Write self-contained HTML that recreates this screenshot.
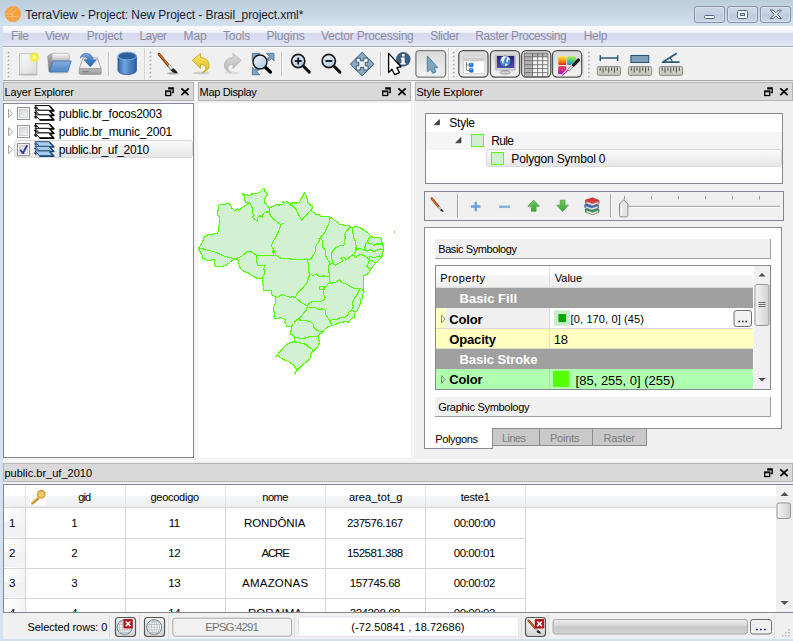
<!DOCTYPE html>
<html><head><meta charset="utf-8"><title>TerraView</title>
<style>
*{box-sizing:border-box;margin:0;padding:0}
html,body{width:793px;height:641px;overflow:hidden}
body{position:relative;background:#f0f0f0;font-family:"Liberation Sans",sans-serif;font-size:11px;color:#000}
.abs{position:absolute}
.t{position:absolute;white-space:pre;font-family:"Liberation Sans",sans-serif}
svg{position:absolute;overflow:visible}
#titlebar{left:0;top:0;width:793px;height:26px;background:linear-gradient(#bccddc 0,#c5d5e4 45%,#d4e2ef 100%)}
#lborder{left:0;top:26px;width:3px;height:615px;background:#d4e2ef}
.wbtn{top:6px;height:17px;width:31px;border:1.500px solid #8791ae;border-radius:3px;background:linear-gradient(#cbd8e7 0,#c3d1e2 48%,#bccbde 52%,#c6d5e6 100%);box-shadow:inset 0 0 0 1px rgba(255,255,255,.3)}
#menubar{left:3px;top:26px;width:790px;height:21px;background:linear-gradient(#fdfdff 0,#f1f3fa 30%,#d6daee 36%,#dcdff1 70%,#e3e6f4 94%,#a3a8c6 95%,#a3a8c6 100%)}
#toolbar{left:3px;top:47px;width:790px;height:34px;background:#f0f0f0;border-top:1px solid #fff;border-bottom:1px solid #a6a6a6}
.dtitle{height:19px;background:#d9d9d9;border:1px solid #b4b4b4}
.panel{background:#fff;border:1px solid #828790}

</style></head><body>
<div id="titlebar" class="abs"></div><div id="lborder" class="abs"></div>
<svg style="left:5px;top:6px" width="16" height="16" viewBox="0 0 16 16"><circle cx="8" cy="8" r="8" fill="#f2a040"/><path d="M7.400 6.600V14.500M2 10.400H14M7.400 6.600L12.500 2.600M3.500 5.600L9.500 .9" stroke="#f7c184" stroke-width=".8" fill="none"/><path d="M1 7.900H7.400" stroke="#f5b672" stroke-width="1.500" fill="none"/></svg>
<span class="t" style="left:25.30px;top:8.84px;font-size:12px;line-height:12px;letter-spacing:-0.085px;color:#1c1c30;">TerraView - Project: New Project - Brasil_project.xml*</span>
<div class="abs wbtn" style="left:694px"></div>
<div class="abs wbtn" style="left:727px"></div>
<div class="abs wbtn" style="left:760px"></div>
<svg style="left:694px;top:6px" width="97" height="17" viewBox="0 0 97 17">
<rect x="10.5" y="9.5" width="10" height="3" rx="1" fill="#f4f6fa" stroke="#5a6880" stroke-width="1"/>
<rect x="43.5" y="4.5" width="10" height="8" rx="1.2" fill="#f4f6fa" stroke="#5a6880" stroke-width="1"/>
<rect x="46.5" y="7.5" width="4" height="2" fill="#c3d0e3" stroke="#5a6880" stroke-width="1"/>
<path transform="translate(81.8 8.3)" d="M-5.6-4.2h3l2.600 2.700 2.600-2.700h3l-4 4.200 4 4.200h-3l-2.600-2.700-2.600 2.700h-3l4-4.200z" fill="#f6f8fb" stroke="#54627c" stroke-width="1" stroke-linejoin="round"/>
</svg>
<div id="menubar" class="abs"></div>
<span class="t" style="left:11.00px;top:30.24px;font-size:12px;line-height:12px;letter-spacing:-0.445px;color:#8c8ca0;">File</span>
<span class="t" style="left:45.00px;top:30.24px;font-size:12px;line-height:12px;letter-spacing:-0.464px;color:#8c8ca0;">View</span>
<span class="t" style="left:86.80px;top:30.24px;font-size:12px;line-height:12px;letter-spacing:-0.241px;color:#8c8ca0;">Project</span>
<span class="t" style="left:139.60px;top:30.24px;font-size:12px;line-height:12px;letter-spacing:-0.654px;color:#8c8ca0;">Layer</span>
<span class="t" style="left:183.60px;top:30.24px;font-size:12px;line-height:12px;letter-spacing:-0.172px;color:#8c8ca0;">Map</span>
<span class="t" style="left:223.00px;top:30.24px;font-size:12px;line-height:12px;letter-spacing:-0.203px;color:#8c8ca0;">Tools</span>
<span class="t" style="left:266.50px;top:30.24px;font-size:12px;line-height:12px;letter-spacing:-0.193px;color:#8c8ca0;">Plugins</span>
<span class="t" style="left:321.00px;top:30.24px;font-size:12px;line-height:12px;letter-spacing:-0.245px;color:#8c8ca0;">Vector Processing</span>
<span class="t" style="left:430.30px;top:30.24px;font-size:12px;line-height:12px;letter-spacing:-0.316px;color:#8c8ca0;">Slider</span>
<span class="t" style="left:475.30px;top:30.24px;font-size:12px;line-height:12px;letter-spacing:-0.415px;color:#8c8ca0;">Raster Processing</span>
<span class="t" style="left:583.70px;top:30.24px;font-size:12px;line-height:12px;letter-spacing:-0.293px;color:#8c8ca0;">Help</span>
<div id="toolbar" class="abs"></div>
<svg style="left:0;top:0" width="793" height="82" viewBox="0 0 793 82">
<defs>
<linearGradient id="gpage" x1="0" y1="0" x2="1" y2="1"><stop offset="0" stop-color="#fdfdfd"/><stop offset="1" stop-color="#d9d9d9"/></linearGradient>
<radialGradient id="gglow"><stop offset="0" stop-color="#ffffd0"/><stop offset=".45" stop-color="#f4ee30"/><stop offset="1" stop-color="#f0e820" stop-opacity="0"/></radialGradient>
<linearGradient id="gfold" x1="0" y1="0" x2="0" y2="1"><stop offset="0" stop-color="#84aee0"/><stop offset="1" stop-color="#5287c8"/></linearGradient>
<linearGradient id="gdrive" x1="0" y1="0" x2="0" y2="1"><stop offset="0" stop-color="#e8e8e8"/><stop offset="1" stop-color="#a8a8a8"/></linearGradient>
<linearGradient id="gcyl" x1="0" y1="0" x2="1" y2="0"><stop offset="0" stop-color="#2f68ac"/><stop offset=".35" stop-color="#6fa3dc"/><stop offset="1" stop-color="#2a5fa2"/></linearGradient>
<linearGradient id="gbtn" x1="0" y1="0" x2="0" y2="1"><stop offset="0" stop-color="#dcdcdc"/><stop offset="1" stop-color="#ececec"/></linearGradient>
<linearGradient id="glens" x1="0" y1="0" x2="1" y2="1"><stop offset="0" stop-color="#f0f6fc"/><stop offset="1" stop-color="#a9c4e2"/></linearGradient>
<linearGradient id="gruler" x1="0" y1="0" x2="0" y2="1"><stop offset="0" stop-color="#dadad2"/><stop offset="1" stop-color="#c2c2b8"/></linearGradient>
<linearGradient id="gyel" x1="0" y1="0" x2="0" y2="1"><stop offset="0" stop-color="#fbe96a"/><stop offset="1" stop-color="#e0b818"/></linearGradient>
<linearGradient id="ggray" x1="0" y1="0" x2="0" y2="1"><stop offset="0" stop-color="#dcdcdc"/><stop offset="1" stop-color="#b4b4b4"/></linearGradient>
</defs>
<rect x="6.8" y="50.8" width="2" height="2" fill="#fff"/><rect x="7.6" y="51.6" width="1.600" height="1.600" fill="#a2a2a2"/><rect x="6.8" y="54.8" width="2" height="2" fill="#fff"/><rect x="7.6" y="55.6" width="1.600" height="1.600" fill="#a2a2a2"/><rect x="6.8" y="58.8" width="2" height="2" fill="#fff"/><rect x="7.6" y="59.6" width="1.600" height="1.600" fill="#a2a2a2"/><rect x="6.8" y="62.9" width="2" height="2" fill="#fff"/><rect x="7.6" y="63.7" width="1.600" height="1.600" fill="#a2a2a2"/><rect x="6.8" y="66.9" width="2" height="2" fill="#fff"/><rect x="7.6" y="67.7" width="1.600" height="1.600" fill="#a2a2a2"/><rect x="6.8" y="70.9" width="2" height="2" fill="#fff"/><rect x="7.6" y="71.7" width="1.600" height="1.600" fill="#a2a2a2"/><rect x="6.8" y="74.9" width="2" height="2" fill="#fff"/><rect x="7.6" y="75.7" width="1.600" height="1.600" fill="#a2a2a2"/>
<rect x="148.8" y="50.8" width="2" height="2" fill="#fff"/><rect x="149.60000000000002" y="51.6" width="1.600" height="1.600" fill="#a2a2a2"/><rect x="148.8" y="54.8" width="2" height="2" fill="#fff"/><rect x="149.60000000000002" y="55.6" width="1.600" height="1.600" fill="#a2a2a2"/><rect x="148.8" y="58.8" width="2" height="2" fill="#fff"/><rect x="149.60000000000002" y="59.6" width="1.600" height="1.600" fill="#a2a2a2"/><rect x="148.8" y="62.9" width="2" height="2" fill="#fff"/><rect x="149.60000000000002" y="63.7" width="1.600" height="1.600" fill="#a2a2a2"/><rect x="148.8" y="66.9" width="2" height="2" fill="#fff"/><rect x="149.60000000000002" y="67.7" width="1.600" height="1.600" fill="#a2a2a2"/><rect x="148.8" y="70.9" width="2" height="2" fill="#fff"/><rect x="149.60000000000002" y="71.7" width="1.600" height="1.600" fill="#a2a2a2"/><rect x="148.8" y="74.9" width="2" height="2" fill="#fff"/><rect x="149.60000000000002" y="75.7" width="1.600" height="1.600" fill="#a2a2a2"/>
<rect x="452" y="50.8" width="2" height="2" fill="#fff"/><rect x="452.8" y="51.6" width="1.600" height="1.600" fill="#a2a2a2"/><rect x="452" y="54.8" width="2" height="2" fill="#fff"/><rect x="452.8" y="55.6" width="1.600" height="1.600" fill="#a2a2a2"/><rect x="452" y="58.8" width="2" height="2" fill="#fff"/><rect x="452.8" y="59.6" width="1.600" height="1.600" fill="#a2a2a2"/><rect x="452" y="62.9" width="2" height="2" fill="#fff"/><rect x="452.8" y="63.7" width="1.600" height="1.600" fill="#a2a2a2"/><rect x="452" y="66.9" width="2" height="2" fill="#fff"/><rect x="452.8" y="67.7" width="1.600" height="1.600" fill="#a2a2a2"/><rect x="452" y="70.9" width="2" height="2" fill="#fff"/><rect x="452.8" y="71.7" width="1.600" height="1.600" fill="#a2a2a2"/><rect x="452" y="74.9" width="2" height="2" fill="#fff"/><rect x="452.8" y="75.7" width="1.600" height="1.600" fill="#a2a2a2"/>
<rect x="587.3" y="50.8" width="2" height="2" fill="#fff"/><rect x="588.0999999999999" y="51.6" width="1.600" height="1.600" fill="#a2a2a2"/><rect x="587.3" y="54.8" width="2" height="2" fill="#fff"/><rect x="588.0999999999999" y="55.6" width="1.600" height="1.600" fill="#a2a2a2"/><rect x="587.3" y="58.8" width="2" height="2" fill="#fff"/><rect x="588.0999999999999" y="59.6" width="1.600" height="1.600" fill="#a2a2a2"/><rect x="587.3" y="62.9" width="2" height="2" fill="#fff"/><rect x="588.0999999999999" y="63.7" width="1.600" height="1.600" fill="#a2a2a2"/><rect x="587.3" y="66.9" width="2" height="2" fill="#fff"/><rect x="588.0999999999999" y="67.7" width="1.600" height="1.600" fill="#a2a2a2"/><rect x="587.3" y="70.9" width="2" height="2" fill="#fff"/><rect x="588.0999999999999" y="71.7" width="1.600" height="1.600" fill="#a2a2a2"/><rect x="587.3" y="74.9" width="2" height="2" fill="#fff"/><rect x="588.0999999999999" y="75.7" width="1.600" height="1.600" fill="#a2a2a2"/>
<path d="M144.5 48V80" stroke="#d0d0d0" stroke-width="1"/><path d="M145.5 48V80" stroke="#fff" stroke-width="1"/>
<path d="M448.5 48V80" stroke="#d0d0d0" stroke-width="1"/><path d="M449.5 48V80" stroke="#fff" stroke-width="1"/>
<path d="M584 48V80" stroke="#d0d0d0" stroke-width="1"/><path d="M585 48V80" stroke="#fff" stroke-width="1"/>
<path d="M108.5 52V76" stroke="#c4c4c4" stroke-width="1"/><path d="M109.5 52V76" stroke="#fafafa" stroke-width="1"/>
<path d="M281.5 52V76" stroke="#c4c4c4" stroke-width="1"/><path d="M282.5 52V76" stroke="#fafafa" stroke-width="1"/>
<path d="M380.5 52V76" stroke="#c4c4c4" stroke-width="1"/><path d="M381.5 52V76" stroke="#fafafa" stroke-width="1"/>
<rect x="18.500" y="73.800" width="19" height="1.600" rx=".8" fill="#000" opacity=".22"/>
<rect x="19.500" y="53.700" width="17.300" height="20.400" rx="1" fill="url(#gpage)" stroke="#bcbcbc" stroke-width="1"/>
<path d="M21.300 55v18" stroke="#dadada" stroke-width=".8"/><path d="M20.300 62h1M20.300 66h1" stroke="#fff" stroke-width="1"/>
<circle cx="34.300" cy="57.300" r="5.900" fill="url(#gglow)"/>
<defs><linearGradient id="gpap" x1="0" y1="0" x2="0" y2="1"><stop offset="0" stop-color="#fcfcfc"/><stop offset="1" stop-color="#b4b4b4"/></linearGradient><linearGradient id="gback" x1="0" y1="0" x2="0" y2="1"><stop offset="0" stop-color="#b4b4b4"/><stop offset="1" stop-color="#6c6c6c"/></linearGradient></defs>
<ellipse cx="59" cy="72.300" rx="10" ry="1.200" fill="#000" opacity=".2"/>
<path d="M47.600 56.200l2.600-2h2.300v17.500h-3.600z" fill="url(#gback)" stroke="#8a8a8a" stroke-width=".5"/>
<path d="M52 53.300h16.300l.9 1.200v7h-17.200z" fill="url(#gpap)" stroke="#a0a0a0" stroke-width=".6"/>
<path d="M52.800 60.900h18.400l-3.400 10.900h-18.300z" fill="url(#gfold)" stroke="#3f70ae" stroke-width=".8" stroke-linejoin="round"/>
<path d="M83 57.800h14.200l3.900 11h-21.900z" fill="#f0f0f0" stroke="#a2a2a2" stroke-width=".9" stroke-linejoin="round"/>
<rect x="79.200" y="68.800" width="21.900" height="5.500" rx="1" fill="url(#gdrive2)" stroke="#8c8c8c" stroke-width=".8"/>
<path d="M82.300 71.600h6.500" stroke="#7c7c7c" stroke-width="1.300"/>
<defs><linearGradient id="gdrive2" x1="0" y1="0" x2="0" y2="1"><stop offset="0" stop-color="#bebebe"/><stop offset="1" stop-color="#9c9c9c"/></linearGradient><linearGradient id="garr" x1="0" y1="0" x2="0" y2="1"><stop offset="0" stop-color="#7eabe2"/><stop offset=".5" stop-color="#3f7cc4"/><stop offset="1" stop-color="#2f66ac"/></linearGradient></defs>
<path d="M80.200 58.200c.6-3 3.300-5 6.400-4.900 3.300.1 5.800 2.500 6.300 6.400h3.600l-6.200 7.100-6.300-7.100h3.900c-.4-2.400-2.500-3.700-4.700-3.400-1.300.2-2.300.9-3 1.900z" fill="url(#garr)" stroke="#2c5e9e" stroke-width=".6" stroke-linejoin="round"/>
<path d="M118 56v14.500c0 2.300 4.100 4 9.200 4s9.200-1.700 9.200-4V56z" fill="url(#gcyl)" stroke="#23518d" stroke-width=".8"/>
<ellipse cx="127.200" cy="56" rx="9.200" ry="3.900" fill="#2c5f9e" stroke="#7fb0e4" stroke-width="1"/>
<ellipse cx="173" cy="73.300" rx="6" ry="1.300" fill="#000" opacity=".28"/>
<path d="M159 54.200l10.200 12.200" stroke="#6a2a06" stroke-width="2.700" stroke-linecap="round"/>
<path d="M159.300 54.200l10 12" stroke="#d06a1c" stroke-width="1.500" stroke-linecap="round"/>
<path d="M168.600 65.400l3.400 4.300" stroke="#8a8a8a" stroke-width="3.200"/><path d="M168.900 65.200l3.400 4.300" stroke="#e6e6e6" stroke-width="1.600"/>
<path d="M170.600 70.300l2.600-2.100c1.800 1 3.400 2.600 4.400 4.900-2.700.3-5.400-.6-7-2.800z" fill="#1e1e1e"/>
<ellipse cx="201" cy="73" rx="8" ry="1.500" fill="#000" opacity=".15"/>
<path d="M192.300 60.200l8.200-6.700v4.100c5.200.3 8.600 3.300 8.600 7.700 0 3.800-2.700 6.300-6.700 7.200 2.300-1.300 3.300-2.900 3.300-4.600 0-2.300-2-3.600-5.200-3.700v4.300z" fill="url(#gyel)" stroke="#c9a010" stroke-width=".8" stroke-linejoin="round"/>
<ellipse cx="232" cy="73" rx="8" ry="1.500" fill="#000" opacity=".08"/>
<path d="M241.200 60.200l-8.200-6.700v4.100c-5.200.3-8.600 3.300-8.600 7.700 0 3.800 2.700 6.300 6.700 7.200-2.300-1.300-3.300-2.900-3.300-4.600 0-2.300 2-3.600 5.200-3.700v4.300z" fill="url(#ggray)" stroke="#b0b0b0" stroke-width=".8" stroke-linejoin="round"/>
<g fill="#7fa2bc" stroke="#456d8c" stroke-width=".8" stroke-linejoin="round"><path d="M252.300 53.300h7.600l-2.400 2.400 2.600 2.600-2.200 2.200-2.600-2.600-3 3z"/><path d="M274 53.300v7.600l-2.400-2.400-2.600 2.600-2.200-2.200 2.600-2.600-3-3z"/><path d="M252.300 74.800v-7.600l2.400 2.400 2.600-2.600 2.200 2.200-2.600 2.600 3 3z"/></g>
<path d="M264.800 66.800l5.600 5.200" stroke="#000" stroke-width="3.400" stroke-linecap="round"/>
<circle cx="260" cy="62" r="7" fill="url(#glens)" stroke="#1c1c1c" stroke-width="1.500"/>
<path d="M302.7 65.500l6.600 6.600" stroke="#111" stroke-width="3" stroke-linecap="round"/>
<circle cx="298.2" cy="61" r="6.600" fill="url(#glens)" stroke="#1a1a1a" stroke-width="1.600"/>
<path d="M294.7 61h7" stroke="#111" stroke-width="1.800"/>
<path d="M298.2 57.500v7" stroke="#111" stroke-width="1.800"/>
<path d="M333.3 65.500l6.600 6.600" stroke="#111" stroke-width="3" stroke-linecap="round"/>
<circle cx="328.8" cy="61" r="6.600" fill="url(#glens)" stroke="#1a1a1a" stroke-width="1.600"/>
<path d="M325.3 61h7" stroke="#111" stroke-width="1.800"/>
<g transform="translate(362.100 64.100)"><rect x="-5.900" y="-5.900" width="11.800" height="11.800" fill="#fff"/><rect x="-2.200" y="-2.200" width="4.400" height="4.400" fill="#e6e8ea"/><g fill="#88aac2" stroke="#2c5068" stroke-width=".9" stroke-linejoin="round"><path d="M0-11.800l5.900 5.900h-4.050v2.700h-3.700v-2.700h-4.050z"/><path d="M0 11.800l5.900-5.900h-4.050v-2.700h-3.700v2.700h-4.050z"/><path d="M-11.800 0l5.900-5.900v4.050h2.700v3.700h-2.700v4.050z"/><path d="M11.800 0l-5.900-5.900v4.050h-2.700v3.700h2.700v4.050z"/></g></g>
<circle cx="403.300" cy="59.300" r="7.200" fill="#3a5f7c"/>
<path d="M401.500 57.500h3.100v5.600h1.100v1.300h-5.300v-1.300h1.100v-4.300h-1.100zM401.900 54h2.700v2.400h-2.700z" fill="#fff"/>
<path d="M388.600 53.400v19.200l3.300-3.300 2.900 5.400 4.600-2.100-2.500-5 4.200-.8z" fill="#fff" stroke="#000" stroke-width="1.300" stroke-linejoin="round"/>
<defs><linearGradient id="gbtn2" x1="0" y1="0" x2="0" y2="1"><stop offset="0" stop-color="#dadada"/><stop offset=".5" stop-color="#e4e4e4"/><stop offset=".52" stop-color="#e9e9e9"/><stop offset="1" stop-color="#f1f1f1"/></linearGradient></defs>
<rect x="415.900" y="50.600" width="29.700" height="26.600" rx="3.500" fill="url(#gbtn2)" stroke="#7c7c7c" stroke-width="1.300"/>
<path d="M427.300 55.900v15.900l3.400-2.500 2.100 4.100 3.300-1.600-2.100-3.800 3.800-.4z" fill="#7fa4c0" stroke="#4a7898" stroke-width=".9" stroke-linejoin="round"/>
<rect x="458.8" y="50.700" width="29.200" height="26.400" rx="4.500" fill="url(#gbtn2)" stroke="#525252" stroke-width="1.300"/>
<rect x="490.4" y="50.700" width="29.200" height="26.400" rx="4.500" fill="url(#gbtn2)" stroke="#525252" stroke-width="1.300"/>
<rect x="521.6" y="50.700" width="29.200" height="26.400" rx="4.500" fill="url(#gbtn2)" stroke="#525252" stroke-width="1.300"/>
<rect x="552.5" y="50.700" width="29.200" height="26.400" rx="4.500" fill="url(#gbtn2)" stroke="#525252" stroke-width="1.300"/>
<rect x="463.500" y="56" width="21.300" height="17.400" fill="#fff" stroke="#c8c8c8" stroke-width=".8"/><rect x="463.900" y="56.400" width="20.500" height="4.900" fill="#cdcdcd"/><rect x="463.900" y="56.400" width="20.500" height="1.600" fill="#dedede"/>
<path d="M466.400 62v8.500h3M466.400 65h3" stroke="#707070" stroke-width=".8" fill="none"/>
<rect x="469.300" y="63" width="3.800" height="3.800" rx=".8" fill="#1f6fe0" stroke="#1450b0" stroke-width=".5"/><rect x="469.300" y="68.400" width="3.800" height="3.800" rx=".8" fill="#1f6fe0" stroke="#1450b0" stroke-width=".5"/><path d="M470 64h2.400M470 69.400h2.400" stroke="#9cc8ff" stroke-width=".8"/>
<defs><linearGradient id="gscr" x1="0" y1="0" x2="0" y2="1"><stop offset="0" stop-color="#26246e"/><stop offset="1" stop-color="#4c4ca4"/></linearGradient></defs>
<path d="M495 55.200h20.800l-.8 14.900h-19.200z" fill="#d4d4d4" stroke="#a4a4a4" stroke-width=".6"/><rect x="496.800" y="56" width="17.500" height="12" fill="url(#gscr)"/>
<path d="M503 70.100h4.600l.5 1.600h-5.600z" fill="#a8a8a8"/><ellipse cx="505.200" cy="72.500" rx="5.300" ry="1.700" fill="#d0d0d0" stroke="#8c8c8c" stroke-width=".7"/>
<circle cx="505.200" cy="61" r="5.400" fill="#4585d6"/><path d="M501.300 58.700c.8-1.500 2.300-2.400 3.700-2.600 1.200.4 1 1.500 0 2.200-.8.700-.3 1.600-1.200 2.400-.6.900.4 1.900-.5 3-1-.4-1.100-1.700-1.700-2.500-.7-.8-.7-1.600-.3-2.500zM506.300 56.400c1.700.3 3 1.400 3.700 2.800-.4.800-1.200.3-1.700 1-.7.700-.1 1.700-1 2.300-.9-.2-1.100-1.200-1-2.100.2-1 .8-1.500.6-2.400-.2-.6-.7-1-.6-1.600zM505.500 63.500c.9-.3 1.700.1 2.300.8-.5.900-1.400 1.600-2.400 1.900-.4-.9-.4-1.900.1-2.700z" fill="#eef3fa"/>
<rect x="524.300" y="53.200" width="23.500" height="23.300" fill="#f4f4f4"/><rect x="524.300" y="53.200" width="8.300" height="23.300" fill="#b2b2b2"/><rect x="524.300" y="53.200" width="23.500" height="3.600" fill="#b2b2b2"/>
<path d="M524.300 53.2h23.500M524.300 56.8h23.500M524.300 60.7h23.500M524.300 64.7h23.500M524.300 68.6h23.500M524.300 72.6h23.500M524.300 76.5h23.500M524.3 53.200v23.300M532.6 53.200v23.300M537.6 53.200v23.300M542.6 53.200v23.300M547.8 53.200v23.300" stroke="#5e5e5e" stroke-width=".75" fill="none"/>
<defs><linearGradient id="gp1" x1="0" y1="0" x2="0" y2="1"><stop offset="0" stop-color="#fbe840"/><stop offset=".5" stop-color="#f7901c"/><stop offset="1" stop-color="#e2281c"/></linearGradient><linearGradient id="gp2" x1="0" y1="0" x2="0" y2="1"><stop offset="0" stop-color="#b4f050"/><stop offset=".55" stop-color="#40c888"/><stop offset="1" stop-color="#1c88d8"/></linearGradient><linearGradient id="gp3" x1="0" y1="0" x2="0" y2="1"><stop offset="0" stop-color="#f04858"/><stop offset=".5" stop-color="#d82890"/><stop offset="1" stop-color="#8c20c8"/></linearGradient></defs>
<rect x="558.200" y="56.300" width="8.100" height="8.800" rx="1.300" fill="url(#gp1)"/>
<path d="M568.500 56.300h6.100c.7 0 1.300.6 1.300 1.300v2.200l-5.300 5.300h-2.100c-.7 0-1.300-.6-1.300-1.300v-6.200c0-.7.600-1.300 1.300-1.300z" fill="url(#gp2)"/>
<path d="M559.500 65.900h5.500c.7 0 1.300.6 1.300 1.300v2.600l-4.500 4.500h-2.300c-.7 0-1.300-.6-1.300-1.300v-5.800c0-.7.600-1.300 1.300-1.300z" fill="url(#gp3)"/>
<path d="M562.200 75.500l6.800-6" stroke="#c83c98" stroke-width="1.100"/><path d="M568.300 70.200l5.300-5.300" stroke="#8c8c8c" stroke-width="3"/><path d="M568.500 70l5.300-5.300" stroke="#e4e4e4" stroke-width="1.400"/><path d="M573.600 64.900l4.800-4.800" stroke="#1a1a1a" stroke-width="3.300" stroke-linecap="round"/>
<rect x="597.3" y="66.400" width="23.300" height="9" rx="2" fill="url(#gruler)" stroke="#8c8c84" stroke-width="1"/>
<path d="M600.20 67.200v3.6M603.05 67.200v5.4M605.90 67.200v3.6M608.75 67.200v5.4M611.60 67.200v3.6M614.45 67.200v5.4M617.30 67.200v3.6" stroke="#4c4c4c" stroke-width="1"/>
<rect x="628.4" y="66.400" width="23.300" height="9" rx="2" fill="url(#gruler)" stroke="#8c8c84" stroke-width="1"/>
<path d="M631.30 67.200v3.6M634.15 67.200v5.4M637.00 67.200v3.6M639.85 67.200v5.4M642.70 67.200v3.6M645.55 67.200v5.4M648.40 67.200v3.6" stroke="#4c4c4c" stroke-width="1"/>
<rect x="659.3" y="66.400" width="23.300" height="9" rx="2" fill="url(#gruler)" stroke="#8c8c84" stroke-width="1"/>
<path d="M662.20 67.200v3.6M665.05 67.200v5.4M667.90 67.200v3.6M670.75 67.200v5.4M673.60 67.200v3.6M676.45 67.200v5.4M679.30 67.200v3.6" stroke="#4c4c4c" stroke-width="1"/>
<path d="M600.300 58.100h17.400M600.300 55.300v5.700M617.700 55.300v5.700" stroke="#2c5a78" stroke-width="1.500" fill="none"/>
<rect x="630.900" y="55.500" width="17.800" height="7" fill="#7f9fb8" stroke="#2c5a78" stroke-width="1.100"/>
<path d="M676.800 53.300l-14.300 8.900h17" stroke="#2c5a78" stroke-width="1.700" fill="none" stroke-linejoin="round"/><path d="M669.800 57.900c1.500 1.200 2.300 2.600 2.500 4.200" stroke="#2c5a78" stroke-width="1.100" fill="none"/>
</svg>
<div class="abs dtitle" style="left:3px;top:82px;width:191px"></div><span class="t" style="left:4.50px;top:86.59px;font-size:11px;line-height:11px;letter-spacing:-0.164px;color:#000;">Layer Explorer</span><svg style="left:0;top:0" width="793" height="641" viewBox="0 0 793 641"><path d="M168.2 88.0h5v4.500h-1.500M168.2 88.9h5" stroke="#000" stroke-width="1.300" fill="none"/><rect x="165.7" y="91.0" width="5" height="4.500" fill="#d9d9d9" stroke="#000" stroke-width="1.300"/><path d="M165.7 91.8h5" stroke="#000" stroke-width="1"/><path d="M181.3 88.4l7.400 6.800M188.7 88.4l-7.400 6.800" stroke="#000" stroke-width="1.800"/></svg>
<div class="abs dtitle" style="left:198px;top:82px;width:213px"></div><span class="t" style="left:199.60px;top:86.59px;font-size:11px;line-height:11px;letter-spacing:-0.332px;color:#000;">Map Display</span><svg style="left:0;top:0" width="793" height="641" viewBox="0 0 793 641"><path d="M385.2 88.0h5v4.500h-1.500M385.2 88.9h5" stroke="#000" stroke-width="1.300" fill="none"/><rect x="382.7" y="91.0" width="5" height="4.500" fill="#d9d9d9" stroke="#000" stroke-width="1.300"/><path d="M382.7 91.8h5" stroke="#000" stroke-width="1"/><path d="M398.3 88.4l7.400 6.800M405.7 88.4l-7.400 6.800" stroke="#000" stroke-width="1.800"/></svg>
<div class="abs dtitle" style="left:415px;top:82px;width:378px"></div><span class="t" style="left:416.40px;top:86.59px;font-size:11px;line-height:11px;letter-spacing:-0.129px;color:#000;">Style Explorer</span><svg style="left:0;top:0" width="793" height="641" viewBox="0 0 793 641"><path d="M767.2 88.0h5v4.500h-1.500M767.2 88.9h5" stroke="#000" stroke-width="1.300" fill="none"/><rect x="764.7" y="91.0" width="5" height="4.500" fill="#d9d9d9" stroke="#000" stroke-width="1.300"/><path d="M764.7 91.8h5" stroke="#000" stroke-width="1"/><path d="M780.3 88.4l7.400 6.800M787.7 88.4l-7.400 6.800" stroke="#000" stroke-width="1.800"/></svg>
<div class="abs dtitle" style="left:3px;top:463px;width:790px"></div><span class="t" style="left:4.50px;top:467.59px;font-size:11px;line-height:11px;letter-spacing:0.003px;color:#000;">public.br_uf_2010</span><svg style="left:0;top:0" width="793" height="641" viewBox="0 0 793 641"><path d="M767.2 469.0h5v4.500h-1.500M767.2 469.9h5" stroke="#000" stroke-width="1.300" fill="none"/><rect x="764.7" y="472.0" width="5" height="4.500" fill="#d9d9d9" stroke="#000" stroke-width="1.300"/><path d="M764.7 472.8h5" stroke="#000" stroke-width="1"/><path d="M780.3 469.4l7.400 6.800M787.7 469.4l-7.400 6.800" stroke="#000" stroke-width="1.800"/></svg>
<div class="abs" style="left:195px;top:82px;width:2px;height:376px;background:#f8f8f8"></div><div class="abs" style="left:412px;top:82px;width:2px;height:376px;background:#f8f8f8"></div><div class="abs" style="left:3px;top:459px;width:790px;height:3px;background:#f6f6f6"></div>
<div class="abs panel" style="left:3px;top:103px;width:191px;height:355px"></div>
<div class="abs" style="left:14px;top:140px;width:179px;height:18px;border:1px solid #d9d9d9;border-radius:3px;background:linear-gradient(#fafafa,#e6e6e6)"></div>
<svg style="left:0;top:0" width="200" height="200" viewBox="0 0 200 200">
<defs><linearGradient id="gcb" x1="0" y1="0" x2="1" y2="1"><stop offset="0" stop-color="#cfd4da"/><stop offset="1" stop-color="#f6f6f6"/></linearGradient></defs>
<path d="M8.500 109.39999999999999l4 4.200-4 4.200z" fill="#fff" stroke="#a6a6a6" stroke-width="1"/>
<rect x="17.500" y="107.50" width="12" height="12" fill="#fff" stroke="#8e8f8f" stroke-width="1"/><rect x="19.500" y="109.50" width="8" height="8" fill="url(#gcb)" stroke="#c4c8cc" stroke-width=".8"/>
<path d="M35 105.60h14.300l4.600 5h-14.300z" fill="#fff" stroke="#000" stroke-width="1" stroke-linejoin="round"/><path d="M39.600 110.90h14.300l-4.400-4.800" stroke="#000" stroke-width="1.500" fill="none" stroke-linejoin="round"/><path d="M34.500 107.10l2 2.200" stroke="#000" stroke-width="1.600"/>
<path d="M35 110.20h14.300l4.600 5h-14.300z" fill="#fff" stroke="#000" stroke-width="1" stroke-linejoin="round"/><path d="M39.600 115.50h14.300l-4.400-4.800" stroke="#000" stroke-width="1.500" fill="none" stroke-linejoin="round"/><path d="M34.500 111.70l2 2.200" stroke="#000" stroke-width="1.600"/>
<path d="M35 114.80h14.300l4.600 5h-14.300z" fill="#fff" stroke="#000" stroke-width="1" stroke-linejoin="round"/><path d="M39.600 120.10h14.300l-4.400-4.800" stroke="#000" stroke-width="1.500" fill="none" stroke-linejoin="round"/><path d="M34.500 116.30l2 2.200" stroke="#000" stroke-width="1.600"/>
<path d="M8.500 127.49999999999999l4 4.200-4 4.200z" fill="#fff" stroke="#a6a6a6" stroke-width="1"/>
<rect x="17.500" y="125.60" width="12" height="12" fill="#fff" stroke="#8e8f8f" stroke-width="1"/><rect x="19.500" y="127.60" width="8" height="8" fill="url(#gcb)" stroke="#c4c8cc" stroke-width=".8"/>
<path d="M35 123.70h14.300l4.600 5h-14.300z" fill="#fff" stroke="#000" stroke-width="1" stroke-linejoin="round"/><path d="M39.600 129.00h14.300l-4.400-4.800" stroke="#000" stroke-width="1.500" fill="none" stroke-linejoin="round"/><path d="M34.500 125.20l2 2.200" stroke="#000" stroke-width="1.600"/>
<path d="M35 128.30h14.300l4.600 5h-14.300z" fill="#fff" stroke="#000" stroke-width="1" stroke-linejoin="round"/><path d="M39.600 133.60h14.300l-4.400-4.800" stroke="#000" stroke-width="1.500" fill="none" stroke-linejoin="round"/><path d="M34.500 129.80l2 2.200" stroke="#000" stroke-width="1.600"/>
<path d="M35 132.90h14.300l4.600 5h-14.300z" fill="#fff" stroke="#000" stroke-width="1" stroke-linejoin="round"/><path d="M39.600 138.20h14.300l-4.400-4.800" stroke="#000" stroke-width="1.500" fill="none" stroke-linejoin="round"/><path d="M34.500 134.40l2 2.200" stroke="#000" stroke-width="1.600"/>
<path d="M8.500 145.5l4 4.200-4 4.200z" fill="#fff" stroke="#a6a6a6" stroke-width="1"/>
<rect x="17.500" y="143.60" width="12" height="12" fill="#fff" stroke="#8e8f8f" stroke-width="1"/><rect x="19.500" y="145.60" width="8" height="8" fill="url(#gcb)" stroke="#c4c8cc" stroke-width=".8"/>
<path d="M20.300 149.7l2.600 3.600 4.300-8" stroke="#2b3a9c" stroke-width="1.900" fill="none" stroke-linejoin="round"/>
<path d="M35 141.70h14.300l4.600 5h-14.300z" fill="#a9cdee" stroke="#1f4a78" stroke-width="1" stroke-linejoin="round"/><path d="M39.600 147.00h14.300l-4.400-4.800" stroke="#1f4a78" stroke-width="1.500" fill="none" stroke-linejoin="round"/><path d="M34.500 143.20l2 2.200" stroke="#1f4a78" stroke-width="1.600"/>
<path d="M35 146.30h14.300l4.600 5h-14.300z" fill="#a9cdee" stroke="#1f4a78" stroke-width="1" stroke-linejoin="round"/><path d="M39.600 151.60h14.300l-4.400-4.800" stroke="#1f4a78" stroke-width="1.500" fill="none" stroke-linejoin="round"/><path d="M34.500 147.80l2 2.200" stroke="#1f4a78" stroke-width="1.600"/>
<path d="M35 150.90h14.300l4.600 5h-14.300z" fill="#a9cdee" stroke="#1f4a78" stroke-width="1" stroke-linejoin="round"/><path d="M39.600 156.20h14.300l-4.400-4.800" stroke="#1f4a78" stroke-width="1.500" fill="none" stroke-linejoin="round"/><path d="M34.500 152.40l2 2.200" stroke="#1f4a78" stroke-width="1.600"/>
</svg>
<span class="t" style="left:58.80px;top:107.64px;font-size:12px;line-height:12px;letter-spacing:-0.223px;color:#000;">public.br_focos2003</span>
<span class="t" style="left:58.80px;top:125.64px;font-size:12px;line-height:12px;letter-spacing:-0.206px;color:#000;">public.br_munic_2001</span>
<span class="t" style="left:58.80px;top:143.64px;font-size:12px;line-height:12px;letter-spacing:-0.307px;color:#000;">public.br_uf_2010</span>
<div class="abs" style="left:198px;top:103px;width:213px;height:355px;background:#fff"></div>
<div class="abs panel" style="left:425px;top:113px;width:358px;height:71px"></div>
<div class="abs" style="left:426px;top:132px;width:356px;height:18px;background:#f5f5f5"></div>
<div class="abs" style="left:486px;top:149px;width:296px;height:18px;border:1px solid #d9d9d9;border-radius:3px;background:linear-gradient(#fafafa,#e6e6e6)"></div>
<svg style="left:0;top:0" width="793" height="641" viewBox="0 0 793 641">
<defs><linearGradient id="ggrn" x1="0" y1="0" x2="0" y2="1"><stop offset="0" stop-color="#74cc5c"/><stop offset="1" stop-color="#3aa632"/></linearGradient></defs>
<path d="M439.500 119.500v5.300h-5.300z" fill="#404040" stroke="#262626" stroke-width=".6"/>
<path d="M461 137.500v5.300h-5.300z" fill="#404040" stroke="#262626" stroke-width=".6"/>
<rect x="471.500" y="134.500" width="12" height="12" fill="#d0efd0" stroke="#55ff00" stroke-width="1"/>
<rect x="491.500" y="152.500" width="12" height="12" fill="#d0efd0" stroke="#55ff00" stroke-width="1"/>
<rect x="424.500" y="191.500" width="359" height="29" fill="#f0f0f0" stroke="#828790" stroke-width="1"/>
<path d="M431.800 198.500l7.800 9.600" stroke="#7a3208" stroke-width="2.400" stroke-linecap="round"/><path d="M431.800 198.500l7.800 9.600" stroke="#d9711f" stroke-width="1.200" stroke-linecap="round"/><path d="M438.800 207l1.800 2.200" stroke="#c4c4c4" stroke-width="2.400"/><path d="M440 210l1.400-1.200c1 .8 1.800 1.700 2.400 3-1.600.2-3-.5-3.800-1.800z" fill="#222"/>
<path d="M457.500 194v23" stroke="#a0a0a0" stroke-width="1"/><path d="M458.500 194v23" stroke="#fff" stroke-width="1"/>
<path d="M610.500 194v23" stroke="#a0a0a0" stroke-width="1"/><path d="M611.500 194v23" stroke="#fff" stroke-width="1"/>
<path d="M471 206.500h9.500M475.750 201.800v9.500" stroke="#669fdb" stroke-width="2.300"/>
<path d="M499 206.800h11" stroke="#86b1de" stroke-width="2.500"/>
<path d="M533.700 200l5.800 6.300h-3.400v5h-4.800v-5h-3.400z" fill="url(#ggrn)" stroke="#37962f" stroke-width=".6" stroke-linejoin="round"/>
<path d="M562.600 211.500l5.800-6.300h-3.400v-5h-4.800v5h-3.400z" fill="url(#ggrn)" stroke="#37962f" stroke-width=".6" stroke-linejoin="round"/>
<g stroke-width=".6"><path d="M585.500 209l7-2 6.500 2.500v3l-6.500 2.200-7-2.600z" fill="#2e9a48" stroke="#1c6a30"/><path d="M586.500 210.600l6 2 5.800-2v1.800l-5.800 2-6-2.200z" fill="#f4f4f4" stroke="#999"/><path d="M584.800 204.600l7-2 6.800 2.500v3l-6.800 2.200-7-2.600z" fill="#2c6fc0" stroke="#1b4c8a"/><path d="M585.800 206.200l6 2 6-2v1.800l-6 2-6-2.200z" fill="#f4f4f4" stroke="#999"/><path d="M585.500 200l7-2.200 6.500 2.600v3.200l-6.500 2.200-7-2.600z" fill="#d83a3a" stroke="#a02020"/><path d="M586.500 201.800l6 2 5.800-2v1.800l-5.800 2-6-2.200z" fill="#f4f4f4" stroke="#999"/></g>
<path d="M628 206.500h152" stroke="#b4b4b4" stroke-width="1"/><path d="M628 207.500h152" stroke="#fff" stroke-width="1"/><path d="M628 205.500h152" stroke="#e0e0e0" stroke-width="1"/>
<path d="M624.5 196v3.500" stroke="#9c9c9c" stroke-width="1"/>
<path d="M651.5 196v3.500" stroke="#9c9c9c" stroke-width="1"/>
<path d="M678.5 196v3.500" stroke="#9c9c9c" stroke-width="1"/>
<path d="M705.5 196v3.500" stroke="#9c9c9c" stroke-width="1"/>
<path d="M732.5 196v3.500" stroke="#9c9c9c" stroke-width="1"/>
<path d="M759.5 196v3.500" stroke="#9c9c9c" stroke-width="1"/>
<path d="M619.500 204l4.200-4.200 4.200 4.200v11.500c0 .8-.5 1.300-1.300 1.300h-5.800c-.8 0-1.300-.5-1.300-1.300z" fill="#e4e4e4" stroke="#8c8c8c" stroke-width="1"/><path d="M621.500 205v10.500" stroke="#fafafa" stroke-width="1.500"/>
</svg>
<span class="t" style="left:449.30px;top:116.64px;font-size:12px;line-height:12px;letter-spacing:-0.244px;color:#000;">Style</span>
<span class="t" style="left:491.30px;top:134.64px;font-size:12px;line-height:12px;letter-spacing:-0.660px;color:#000;">Rule</span>
<span class="t" style="left:511.30px;top:152.64px;font-size:12px;line-height:12px;letter-spacing:-0.168px;color:#000;">Polygon Symbol 0</span>
<div class="abs" style="left:424px;top:227px;width:358px;height:202px;background:#fff;border:1px solid #898c95"></div>
<div class="abs" style="left:435px;top:239px;width:336px;height:20px;background:#f0f0f0;border-right:1px solid #a0a0a0;border-bottom:1px solid #a0a0a0"></div>
<div class="abs" style="left:435px;top:397px;width:336px;height:20px;background:#f0f0f0;border-right:1px solid #a0a0a0;border-bottom:1px solid #a0a0a0"></div>
<span class="t" style="left:438.20px;top:243.69px;font-size:11px;line-height:11px;letter-spacing:-0.398px;color:#000;">Basic Symbology</span>
<span class="t" style="left:438.20px;top:401.69px;font-size:11px;line-height:11px;letter-spacing:-0.293px;color:#000;">Graphic Symbology</span>
<div class="abs" style="left:435px;top:265px;width:336px;height:125px;background:#fff;border:1px solid #828790"></div>
<div class="abs" style="left:436px;top:266px;width:317px;height:22px;background:linear-gradient(#fff 0,#fff 40%,#f5f5f6 42%,#f0f0f1 92%,#d8d8d8 100%)"></div>
<div class="abs" style="left:549px;top:266px;width:1px;height:21px;background:#dcdcdc"></div>
<span class="t" style="left:440.20px;top:272.69px;font-size:11px;line-height:11px;letter-spacing:0.461px;color:#000;">Property</span>
<span class="t" style="left:554.80px;top:272.69px;font-size:11px;line-height:11px;letter-spacing:-0.029px;color:#000;">Value</span>
<div class="abs" style="left:436px;top:288px;width:317px;height:20px;background:#a0a0a0"></div>
<div class="abs" style="left:436px;top:308px;width:317px;height:21px;background:#fff"></div>
<div class="abs" style="left:436px;top:308px;width:10px;height:20px;background:#ffffc8"></div>
<div class="abs" style="left:446px;top:308px;width:103px;height:20px;background:#efefef"></div>
<div class="abs" style="left:436px;top:329px;width:317px;height:20px;background:#ffffbf"></div>
<div class="abs" style="left:436px;top:349px;width:317px;height:20px;background:#a0a0a0"></div>
<div class="abs" style="left:436px;top:369px;width:317px;height:20px;background:#afffaf"></div>
<div class="abs" style="left:436px;top:328px;width:317px;height:1px;background:#dcdcdc"></div>
<div class="abs" style="left:436px;top:348px;width:317px;height:1px;background:#e0e0c8"></div>
<div class="abs" style="left:549px;top:308px;width:1px;height:41px;background:#dcdcdc"></div>
<div class="abs" style="left:549px;top:369px;width:1px;height:20px;background:#a4e6a4"></div>
<span class="t" style="left:459.50px;top:292.30px;font-size:13px;line-height:13px;letter-spacing:0.047px;color:#fff;font-weight:bold;">Basic Fill</span>
<span class="t" style="left:459.50px;top:353.30px;font-size:13px;line-height:13px;letter-spacing:-0.069px;color:#fff;font-weight:bold;">Basic Stroke</span>
<span class="t" style="left:449.30px;top:313.00px;font-size:13px;line-height:13px;letter-spacing:-0.185px;color:#000;font-weight:bold;">Color</span>
<span class="t" style="left:449.30px;top:333.00px;font-size:13px;line-height:13px;letter-spacing:-0.164px;color:#000;font-weight:bold;">Opacity</span>
<span class="t" style="left:449.30px;top:373.30px;font-size:13px;line-height:13px;letter-spacing:-0.185px;color:#000;font-weight:bold;">Color</span>
<span class="t" style="left:553.80px;top:333.00px;font-size:13px;line-height:13px;letter-spacing:-0.260px;color:#000;">18</span>
<span class="t" style="left:570.60px;top:313.99px;font-size:11px;line-height:11px;letter-spacing:0.124px;color:#000;">[0, 170, 0] (45)</span>
<span class="t" style="left:575.60px;top:373.50px;font-size:13px;line-height:13px;letter-spacing:-0.001px;color:#000;">[85, 255, 0] (255)</span>
<svg style="left:0;top:0" width="793" height="641" viewBox="0 0 793 641">
<path d="M441.500 315l3.500 4-3.500 4z" fill="none" stroke="#8c8c8c" stroke-width="1"/>
<path d="M441.500 375.500l3.500 4-3.500 4z" fill="none" stroke="#8c8c8c" stroke-width="1"/>
<rect x="554" y="310.300" width="16" height="15.500" fill="#cbeccb"/><rect x="558.400" y="314.100" width="7.700" height="8" fill="#00a500"/>
<rect x="553" y="371" width="16.200" height="16" fill="#55ff00"/>
<rect x="734" y="310.500" width="17.500" height="16" rx="2.500" fill="#f2f2f2" stroke="#707070" stroke-width="1"/><path d="M738.500 321.500h1.500M742 321.500h1.500M745.500 321.500h1.500" stroke="#000" stroke-width="1.300"/>
<rect x="754" y="266" width="16" height="123" fill="#f0f0f0"/>
<path d="M758.500 276.500l3.500-3.500 3.500 3.500z" fill="#4c4c4c"/><path d="M758.500 378l3.500 3.500 3.500-3.500z" fill="#4c4c4c"/>
<defs><linearGradient id="gthumb" x1="0" y1="0" x2="1" y2="0"><stop offset="0" stop-color="#f4f4f4"/><stop offset=".5" stop-color="#e2e2e2"/><stop offset="1" stop-color="#cfcfcf"/></linearGradient></defs>
<rect x="755" y="284.500" width="14" height="41" rx="2" fill="url(#gthumb)" stroke="#979797" stroke-width="1"/><path d="M758.500 302.500h7M758.500 304.500h7M758.500 306.500h7" stroke="#6c6c6c" stroke-width="1"/>
</svg>
<div class="abs" style="left:424px;top:428px;width:69px;height:21px;background:#fff;border:1px solid #898c95;border-top:none"></div>
<div class="abs" style="left:492px;top:428px;width:48px;height:18px;background:#c9c9c9;border:1px solid #8c8c8c;border-top:1px solid #898c95"></div>
<span class="t" style="left:502.00px;top:433.29px;font-size:11px;line-height:11px;letter-spacing:-0.574px;color:#7c7c7c;">Lines</span>
<div class="abs" style="left:538.5px;top:428px;width:54.5px;height:18px;background:#c9c9c9;border:1px solid #8c8c8c;border-top:1px solid #898c95"></div>
<span class="t" style="left:550.00px;top:433.29px;font-size:11px;line-height:11px;letter-spacing:-0.214px;color:#7c7c7c;">Points</span>
<div class="abs" style="left:591.5px;top:428px;width:55px;height:18px;background:#c9c9c9;border:1px solid #8c8c8c;border-top:1px solid #898c95"></div>
<span class="t" style="left:603.50px;top:433.29px;font-size:11px;line-height:11px;letter-spacing:-0.180px;color:#7c7c7c;">Raster</span>
<span class="t" style="left:435.30px;top:433.69px;font-size:11px;line-height:11px;letter-spacing:-0.365px;color:#000;">Polygons</span>
<div class="abs" style="left:3px;top:484px;width:790px;height:129px;background:#fff;border:1px solid #828790;border-right:none;overflow:hidden" id="tbl">
<div class="abs" style="left:0px;top:0px;width:772px;height:23px;background:linear-gradient(#fff 0,#fff 45%,#f3f4f6 50%,#f0f1f3 90%,#e2e3e5 100%)"></div>
<div class="abs" style="left:0px;top:23px;width:21px;height:110px;background:linear-gradient(90deg,#fff,#f4f4f5)"></div>
<div class="abs" style="left:0px;top:37px;width:21px;height:15px;background:#f1f2f4"></div>
<div class="abs" style="left:0px;top:67px;width:21px;height:15px;background:#f1f2f4"></div>
<div class="abs" style="left:0px;top:97px;width:21px;height:15px;background:#f1f2f4"></div>
<div class="abs" style="left:0px;top:127px;width:21px;height:15px;background:#f1f2f4"></div>
<div class="abs" style="left:21px;top:0px;width:1px;height:23px;background:#e2e2e2"></div>
<div class="abs" style="left:21px;top:23px;width:1px;height:106px;background:#d6d6d6"></div>
<div class="abs" style="left:121px;top:0px;width:1px;height:23px;background:#e2e2e2"></div>
<div class="abs" style="left:121px;top:23px;width:1px;height:106px;background:#d6d6d6"></div>
<div class="abs" style="left:221px;top:0px;width:1px;height:23px;background:#e2e2e2"></div>
<div class="abs" style="left:221px;top:23px;width:1px;height:106px;background:#d6d6d6"></div>
<div class="abs" style="left:321px;top:0px;width:1px;height:23px;background:#e2e2e2"></div>
<div class="abs" style="left:321px;top:23px;width:1px;height:106px;background:#d6d6d6"></div>
<div class="abs" style="left:421px;top:0px;width:1px;height:23px;background:#e2e2e2"></div>
<div class="abs" style="left:421px;top:23px;width:1px;height:106px;background:#d6d6d6"></div>
<div class="abs" style="left:521px;top:0px;width:1px;height:23px;background:#e2e2e2"></div>
<div class="abs" style="left:521px;top:23px;width:1px;height:106px;background:#d6d6d6"></div>
<div class="abs" style="left:0px;top:53px;width:522px;height:1px;background:#d6d6d6"></div>
<div class="abs" style="left:0px;top:83px;width:522px;height:1px;background:#d6d6d6"></div>
<div class="abs" style="left:0px;top:113px;width:522px;height:1px;background:#d6d6d6"></div>
<div class="abs" style="left:0px;top:22px;width:772px;height:1px;background:#d9d9d9"></div>
<div class="abs" style="left:772px;top:0px;width:17px;height:128px;background:#f0f0f0"></div>
</div>
<svg style="left:0;top:0" width="793" height="641" viewBox="0 0 793 641">
<path d="M780.500 496l4-4 4 4z" fill="#505050"/><path d="M780.500 601l4 4 4-4z" fill="#505050"/>
<rect x="777" y="503" width="13.500" height="15.500" rx="2" fill="url(#gthumb)" stroke="#979797" stroke-width="1"/>
<rect x="30" y="489" width="16" height="16" fill="#fff"/>
<path d="M31.300 503.300l1.800.1.200-1.500 1.500-.1.100-1.500 1.500 0 2.200-2.400" stroke="#c98a1c" stroke-width="2.200" fill="none" stroke-linejoin="round"/><path d="M31.800 502.800l7-7" stroke="#f3c860" stroke-width="1.200"/>
<circle cx="41.300" cy="494.300" r="3.700" fill="#f6cf6a" stroke="#c98a1c" stroke-width="1.100"/><circle cx="42.400" cy="493.200" r="1.200" fill="#fff" stroke="#c98a1c" stroke-width=".6"/>
</svg>
<span class="t" style="left:78.30px;top:491.69px;font-size:11px;line-height:11px;letter-spacing:-0.890px;color:#000;">gid</span>
<span class="t" style="left:150.50px;top:491.69px;font-size:11px;line-height:11px;letter-spacing:-0.271px;color:#000;">geocodigo</span>
<span class="t" style="left:262.30px;top:491.69px;font-size:11px;line-height:11px;letter-spacing:-0.472px;color:#000;">nome</span>
<span class="t" style="left:348.90px;top:491.69px;font-size:11px;line-height:11px;letter-spacing:0.100px;color:#000;">area_tot_g</span>
<span class="t" style="left:460.70px;top:491.69px;font-size:11px;line-height:11px;letter-spacing:-0.173px;color:#000;">teste1</span>
<span class="t" style="left:9.00px;top:517.97px;font-size:11.5px;line-height:11.5px;letter-spacing:-1.696px;color:#000;">1</span>
<span class="t" style="left:71.20px;top:517.97px;font-size:11.5px;line-height:11.5px;letter-spacing:0.000px;color:#000;">1</span>
<span class="t" style="left:168.67px;top:517.97px;font-size:11.5px;line-height:11.5px;letter-spacing:-0.478px;color:#000;">11</span>
<span class="t" style="left:244.00px;top:517.97px;font-size:11.5px;line-height:11.5px;letter-spacing:-0.096px;color:#000;">RONDÔNIA</span>
<span class="t" style="left:346.90px;top:517.97px;font-size:11.5px;line-height:11.5px;letter-spacing:-0.495px;color:#000;">237576.167</span>
<span class="t" style="left:453.70px;top:517.97px;font-size:11.5px;line-height:11.5px;letter-spacing:-0.452px;color:#000;">00:00:00</span>
<span class="t" style="left:9.00px;top:547.97px;font-size:11.5px;line-height:11.5px;letter-spacing:-1.696px;color:#000;">2</span>
<span class="t" style="left:71.20px;top:547.97px;font-size:11.5px;line-height:11.5px;letter-spacing:0.000px;color:#000;">2</span>
<span class="t" style="left:168.26px;top:547.97px;font-size:11.5px;line-height:11.5px;letter-spacing:-0.512px;color:#000;">12</span>
<span class="t" style="left:261.50px;top:547.97px;font-size:11.5px;line-height:11.5px;letter-spacing:-1.217px;color:#000;">ACRE</span>
<span class="t" style="left:346.90px;top:547.97px;font-size:11.5px;line-height:11.5px;letter-spacing:-0.495px;color:#000;">152581.388</span>
<span class="t" style="left:453.70px;top:547.97px;font-size:11.5px;line-height:11.5px;letter-spacing:-0.452px;color:#000;">00:00:01</span>
<span class="t" style="left:9.00px;top:577.97px;font-size:11.5px;line-height:11.5px;letter-spacing:-1.696px;color:#000;">3</span>
<span class="t" style="left:71.20px;top:577.97px;font-size:11.5px;line-height:11.5px;letter-spacing:0.000px;color:#000;">3</span>
<span class="t" style="left:168.26px;top:577.97px;font-size:11.5px;line-height:11.5px;letter-spacing:-0.512px;color:#000;">13</span>
<span class="t" style="left:242.10px;top:577.97px;font-size:11.5px;line-height:11.5px;letter-spacing:0.209px;color:#000;">AMAZONAS</span>
<span class="t" style="left:349.70px;top:577.97px;font-size:11.5px;line-height:11.5px;letter-spacing:-0.445px;color:#000;">157745.68</span>
<span class="t" style="left:453.70px;top:577.97px;font-size:11.5px;line-height:11.5px;letter-spacing:-0.452px;color:#000;">00:00:02</span>
<div class="abs" style="left:4px;top:600px;width:522px;height:12px;overflow:hidden">
<span class="t" style="left:5.00px;top:7.97px;font-size:11.5px;line-height:11.5px;letter-spacing:-1.696px;color:#000;">4</span>
<span class="t" style="left:67.20px;top:7.97px;font-size:11.5px;line-height:11.5px;letter-spacing:0.000px;color:#000;">4</span>
<span class="t" style="left:164.26px;top:7.97px;font-size:11.5px;line-height:11.5px;letter-spacing:-0.512px;color:#000;">14</span>
<span class="t" style="left:244.00px;top:7.97px;font-size:11.5px;line-height:11.5px;letter-spacing:0.055px;color:#000;">RORAIMA</span>
<span class="t" style="left:345.70px;top:7.97px;font-size:11.5px;line-height:11.5px;letter-spacing:-0.445px;color:#000;">224298.98</span>
<span class="t" style="left:449.70px;top:7.97px;font-size:11.5px;line-height:11.5px;letter-spacing:-0.452px;color:#000;">00:00:03</span>
</div>
<div class="abs" style="left:0;top:639px;width:793px;height:2px;background:#d3dfee"></div>
<span class="t" style="left:27.60px;top:621.89px;font-size:11px;line-height:11px;letter-spacing:-0.101px;color:#000;">Selected rows: 0</span>
<div class="abs" style="left:109px;top:615px;width:1px;height:23px;background:#dcdcdc"></div>
<div class="abs" style="left:138.5px;top:615px;width:1px;height:23px;background:#dcdcdc"></div>
<div class="abs" style="left:167.5px;top:615px;width:1px;height:23px;background:#dcdcdc"></div>
<div class="abs" style="left:294px;top:615px;width:1px;height:23px;background:#dcdcdc"></div>
<div class="abs" style="left:521px;top:615px;width:1px;height:23px;background:#dcdcdc"></div>
<div class="abs" style="left:548px;top:615px;width:1px;height:23px;background:#dcdcdc"></div>
<div class="abs" style="left:774px;top:615px;width:1px;height:23px;background:#dcdcdc"></div>
<svg style="left:0;top:0" width="793" height="641" viewBox="0 0 793 641">
<defs><linearGradient id="gsb" x1="0" y1="0" x2="0" y2="1"><stop offset="0" stop-color="#f2f2f2"/><stop offset=".6" stop-color="#e6e6e6"/><stop offset="1" stop-color="#cfcfcf"/></linearGradient><linearGradient id="gpb" x1="0" y1="0" x2="0" y2="1"><stop offset="0" stop-color="#eeeeee"/><stop offset=".42" stop-color="#d6d6d6"/><stop offset=".5" stop-color="#c8c8c8"/><stop offset="1" stop-color="#d4d4d4"/></linearGradient></defs>
<rect x="115.5" y="617.500" width="20" height="19" rx="3" fill="url(#gsb)" stroke="#565656" stroke-width="1.200"/>
<rect x="144.5" y="617.500" width="20" height="19" rx="3" fill="url(#gsb)" stroke="#565656" stroke-width="1.200"/>
<circle cx="124.7" cy="627.2" r="7.5" fill="#fdfdfd" stroke="#5d7d8d" stroke-width="1"/><g stroke="#9aa4aa" stroke-width=".55" fill="none"><ellipse cx="124.7" cy="627.2" rx="2.70" ry="7.5"/><ellipse cx="124.7" cy="627.2" rx="5.40" ry="7.5"/><path d="M124.7 619.7v15.0M117.2 627.2h15.0M117.73 624.50h13.95M117.73 629.90h13.95M119.45 621.95h10.50M119.45 632.45h10.50"/></g>
<circle cx="154.2" cy="627.2" r="7.5" fill="#fdfdfd" stroke="#5d7d8d" stroke-width="1"/><g stroke="#9aa4aa" stroke-width=".55" fill="none"><ellipse cx="154.2" cy="627.2" rx="2.70" ry="7.5"/><ellipse cx="154.2" cy="627.2" rx="5.40" ry="7.5"/><path d="M154.2 619.7v15.0M146.7 627.2h15.0M147.22 624.50h13.95M147.22 629.90h13.95M148.95 621.95h10.50M148.95 632.45h10.50"/></g>
<rect x="123.400" y="619" width="9.400" height="9.600" rx="1.300" fill="#b5121b"/><path d="M125.800 621.500l4.600 4.600M130.400 621.500l-4.600 4.600" stroke="#fff" stroke-width="1.700"/>
<rect x="172.800" y="618.200" width="118.700" height="18" rx="2.500" fill="#f1f1f1" stroke="#a9a9a9" stroke-width="1"/>
<rect x="298.500" y="617" width="220" height="19.500" rx="1" fill="#fff" stroke="#e2e3ea" stroke-width="1"/>
<rect x="525.500" y="617.500" width="20" height="19" rx="3" fill="url(#gsb)" stroke="#565656" stroke-width="1.200"/>
<path d="M528.500 620.500l7.500 8.500" stroke="#7a3208" stroke-width="2.200" stroke-linecap="round"/><path d="M528.500 620.500l7.500 8.500" stroke="#d9711f" stroke-width="1.100" stroke-linecap="round"/><path d="M535.500 628.500l1.800 2" stroke="#bdbdbd" stroke-width="2.400"/><path d="M536.600 631.400l1.500-1.300c1.200.8 2.300 2 3 3.400-1.800.2-3.600-.6-4.500-2.100z" fill="#222"/>
<rect x="534.800" y="619" width="9.400" height="9.600" rx="1.300" fill="#b5121b"/><path d="M537.200 621.500l4.600 4.600M541.800 621.500l-4.600 4.600" stroke="#fff" stroke-width="1.700"/>
<rect x="553" y="619.500" width="194.500" height="14.500" rx="2.500" fill="url(#gpb)" stroke="#a8a8a8" stroke-width="1"/>
<rect x="750.500" y="619.500" width="21" height="14.500" rx="2.500" fill="#f0f0f0" stroke="#707070" stroke-width="1"/><path d="M756 629.500h1.800M760 629.500h1.800M764 629.500h1.800" stroke="#1a2a8a" stroke-width="1.400"/>
<rect x="788" y="635" width="1.500" height="1.500" fill="#b4b4b4"/><rect x="788" y="632" width="1.500" height="1.500" fill="#b4b4b4"/><rect x="788" y="629" width="1.500" height="1.500" fill="#b4b4b4"/><rect x="785" y="635" width="1.500" height="1.500" fill="#b4b4b4"/><rect x="785" y="632" width="1.500" height="1.500" fill="#b4b4b4"/><rect x="782" y="635" width="1.500" height="1.500" fill="#b4b4b4"/>
</svg>
<span class="t" style="left:205.30px;top:622.27px;font-size:11.5px;line-height:11.5px;letter-spacing:-0.904px;color:#747474;">EPSG:4291</span>
<span class="t" style="left:351.30px;top:621.89px;font-size:11px;line-height:11px;letter-spacing:0.061px;color:#000;">(-72.50841 , 18.72686)</span>
<svg style="left:0;top:0" width="793" height="641" viewBox="0 0 793 641" shape-rendering="crispEdges">
<path d="M198.5 248.4L202.6 242.3L203.6 237.8L208.2 234.7L216.8 233.5L218.3 231.7L219.8 219.0L219.1 216.5L217.5 215.4L217.5 211.2L218.5 210.2L218.5 205.8L219.3 204.8L229.5 203.5L231.0 205.8L232.0 208.3L234.8 210.6L237.1 208.8L238.6 210.2L244.7 205.8L249.3 202.8L245.7 202.3L244.7 199.2L244.5 196.2L242.5 193.6L249.8 195.7L251.3 194.1L256.9 193.6L259.9 192.1L261.0 191.1L263.6 188.3L265.1 190.1L264.9 191.9L266.6 192.3L267.6 195.2L265.6 196.7L264.6 200.2L264.6 203.3L266.3 203.8L267.6 206.3L269.2 207.5L272.2 206.8L274.2 205.5L277.3 204.3L278.3 205.1L281.8 204.8L283.4 203.8L282.3 201.7L284.9 202.3L287.4 201.7L288.4 203.3L289.4 204.3L291.5 203.8L293.0 202.8L296.0 203.1L299.1 202.5L300.1 200.7L300.6 198.7L301.8 198.2L302.6 196.2L304.5 192.6L305.5 193.6L306.7 197.2L307.4 200.7L308.2 202.8L309.7 203.8L310.2 205.3L312.8 205.5L312.6 207.8L311.2 209.7L311.8 211.4L314.3 212.9L315.8 214.2L319.4 214.4L320.4 216.3L323.0 217.0L325.6 216.5L327.6 216.5L331.1 217.5L334.2 220.0L337.7 222.0L339.3 224.6L341.3 224.6L344.3 225.1L349.4 225.6L350.4 227.1L351.9 227.4L356.5 226.6L361.1 228.1L364.6 230.7L368.2 233.2L371.0 236.0L373.0 237.5L380.0 237.5L381.7 239.5L382.1 243.0L382.5 244.0L383.4 246.5L383.7 250.0L382.4 252.9L381.9 256.9L379.5 259.4L376.5 262.4L373.5 265.4L371.0 268.9L369.0 271.9L367.5 274.4L364.0 275.4L363.2 278.9L363.4 287.6L364.1 291.6L362.8 294.7L362.6 297.7L360.6 299.7L360.0 304.8L358.0 308.9L357.0 311.0L356.0 311.5L354.5 314.1L354.5 317.1L351.4 318.6L349.9 320.1L348.4 322.2L345.3 321.7L339.3 322.7L336.2 324.2L332.2 325.7L328.1 326.7L324.0 329.8L322.5 332.3L319.9 333.8L318.9 335.4L318.3 339.4L319.4 341.4L318.9 344.5L316.8 348.0L313.3 351.1L310.7 353.6L310.2 357.7L307.7 361.2L303.6 363.8L300.6 366.8L297.0 370.9L295.0 373.4L296.0 370.9L297.0 368.3L295.0 367.8L294.0 365.3L291.0 363.2L287.4 361.2L283.4 359.7L279.8 357.2L278.3 355.6L275.8 356.4L278.3 353.6L281.3 350.1L284.4 346.5L288.4 343.5L293.0 341.9L294.5 340.9L294.5 336.9L292.5 334.8L290.0 334.3L290.7 331.8L291.5 328.8L291.0 326.4L286.9 326.2L286.4 324.7L284.6 322.2L285.4 319.6L280.8 317.6L276.3 318.9L273.2 317.6L274.2 316.6L274.7 313.0L273.4 310.0L273.7 306.8L275.2 303.8L275.7 299.7L275.7 297.7L275.2 296.7L271.7 294.7L271.2 290.8L263.3 290.6L263.1 285.5L262.6 281.5L262.1 278.4L260.0 278.4L255.9 277.9L252.8 275.9L250.8 274.9L247.7 272.4L244.7 271.8L241.7 269.8L239.6 267.3L238.6 263.2L238.1 260.2L235.5 258.8L234.0 259.5L230.5 261.7L226.4 265.1L223.4 266.1L216.8 266.3L214.3 265.8L214.6 259.5L206.7 260.7L205.1 259.2L202.6 258.2L202.1 255.1L199.6 251.1Z" fill="#d2f0d2" stroke="#55ff00" stroke-width="1.15" stroke-linejoin="round"/>
<path d="M198.5 247.8L205.1 249.5L215.3 252.1L225.4 256.6L235.5 258.8M235.5 258.8L238.6 257.6L241.7 256.1L244.7 253.6L247.7 251.3L250.8 251.3L253.8 253.6L255.9 254.9M255.9 254.9L256.9 255.6L256.7 261.2L257.9 265.3L260.0 265.8L265.1 265.8L263.6 268.8L265.1 271.3L263.6 275.4L262.1 277.4L262.1 278.4M255.9 254.9L258.0 255.6L273.2 255.1L273.0 251.1L273.2 249.0M273.7 250.0L274.7 252.1L275.7 255.1L279.8 258.0L293.0 259.2L307.7 260.0M249.3 202.8L251.8 205.8L252.8 213.4L254.3 215.4L252.3 217.5L257.9 221.5L257.1 218.0L259.9 215.4L262.6 217.5L263.1 214.4L264.6 212.2L269.2 211.9L269.2 207.5M269.2 211.9L270.2 215.4L273.2 219.0L277.8 222.5L280.8 224.6L283.4 223.3M280.8 224.6L279.8 228.6L276.8 234.7L273.7 240.8L271.2 245.9L273.2 249.0M289.4 204.3L292.0 205.8L293.5 207.3L296.5 209.9L297.0 211.9L299.6 216.5L301.6 220.0L305.7 215.9L311.2 209.7M330.0 218.0L329.6 221.0L328.6 224.6L326.6 228.1L325.1 231.7L323.5 234.7L321.0 236.2L320.5 237.8L318.9 238.8L319.9 240.8L316.3 244.9L315.5 248.0L315.8 250.0L313.8 254.6L310.7 259.2L307.7 260.0M320.5 237.8L322.5 240.8L322.8 247.0L325.1 250.0L325.6 256.1L328.1 260.2L330.5 264.0L328.1 266.3L328.6 271.3L329.6 274.4L329.1 276.4L329.1 278.4L330.6 282.5L328.0 284.0M350.4 227.1L347.9 229.6L345.3 232.7L344.8 235.7L345.3 237.8L344.3 240.8L345.3 243.8L343.8 245.4L339.3 245.7L335.7 248.0L333.2 250.0L331.6 253.1L331.1 257.1L332.2 260.2L333.2 263.2L330.5 264.0M309.7 274.4L313.3 275.4L316.3 273.9L318.9 276.4L323.0 275.9L329.1 276.4M307.7 260.0L308.4 265.3L308.7 271.3L309.7 274.4L308.2 278.4L307.2 282.5L304.7 285.5L301.6 288.6L298.6 291.6L296.5 294.7L295.5 297.7M295.5 297.7L293.0 296.7L290.5 297.2L287.4 296.7L285.4 295.7L282.8 294.5L279.8 295.7L277.8 297.2L275.7 297.7M295.5 297.7L298.1 299.7L300.6 302.3L304.7 304.3L307.2 305.8L309.7 302.3L314.8 301.3L321.0 301.8L324.0 299.7L325.1 297.7L323.5 293.7L324.0 289.6L326.1 286.0L328.0 284.0M328.0 284.0L331.1 283.5L336.2 282.0L339.3 280.0L342.8 283.0L347.4 284.5L351.4 287.1L354.5 288.6L360.0 288.3L363.8 291.0M360.0 288.3L358.5 291.6L356.5 295.7L353.5 299.7L352.4 303.8L353.5 306.8L351.4 309.9L351.0 310.5L356.0 311.5M351.0 310.5L348.4 312.5L347.9 315.1L344.8 317.1L340.3 317.6L337.2 319.1L333.2 319.6L329.6 320.6L332.2 325.7M307.2 305.8L307.0 307.5L310.7 307.3L315.8 307.9L317.8 309.4L323.0 308.9L325.1 310.0L325.6 314.1L327.6 317.6L329.6 320.6M307.0 307.5L306.5 309.9L303.6 313.0L300.6 317.1L297.0 319.6L295.0 321.7L292.5 324.7L291.0 326.4M297.0 319.6L300.6 320.1L305.7 320.6L310.7 321.7L313.3 324.2L314.3 328.3L317.8 330.8L320.9 331.8L322.5 332.3M294.5 337.2L298.6 337.9L302.6 338.9L305.7 337.9L308.7 336.9L313.3 336.9L317.8 335.9L318.9 335.4M293.5 341.9L298.6 342.5L302.6 343.5L306.2 344.5L308.7 347.0L311.8 348.5L313.3 351.1M319.4 286.5L324.0 286.5L324.0 289.6L319.4 289.6L319.4 286.5M351.9 227.4L353.0 233.0L354.0 238.5L355.5 241.5L355.5 245.0L356.5 246.5L355.5 249.0L356.5 250.0L355.5 251.6L353.5 254.6M333.2 263.7L335.7 265.3L338.7 263.2L341.8 261.7L342.8 259.7L340.8 258.2L342.8 257.1L345.3 258.7L345.8 260.2L347.4 258.7L351.4 255.6L353.5 254.6L355.5 257.8L357.5 255.6L361.0 254.5L364.0 255.5L367.0 257.8L369.3 259.8M355.5 249.0L359.0 249.0L361.5 248.5L363.5 250.0L365.0 250.0M371.0 236.0L369.0 238.5L367.5 241.5L365.5 243.5L365.0 246.5L365.0 250.0L367.5 251.0L371.0 249.0L373.0 252.0L376.5 250.5L380.0 249.0L383.6 249.5M366.0 244.0L368.5 243.0L371.5 243.5L373.5 245.5L376.0 244.0L382.5 244.0M369.3 259.8L370.0 256.0L374.0 258.0L377.0 256.4L380.0 256.0L382.0 256.4M369.3 259.8L371.5 260.4L375.5 263.0M369.3 259.8L368.5 263.0L366.5 266.4L368.5 268.0L371.0 268.9" fill="none" stroke="#55ff00" stroke-width="1.15" stroke-linejoin="round"/>
<rect x="394" y="231" width="1" height="2" fill="#55ff00"/>
</svg>
</body></html>
